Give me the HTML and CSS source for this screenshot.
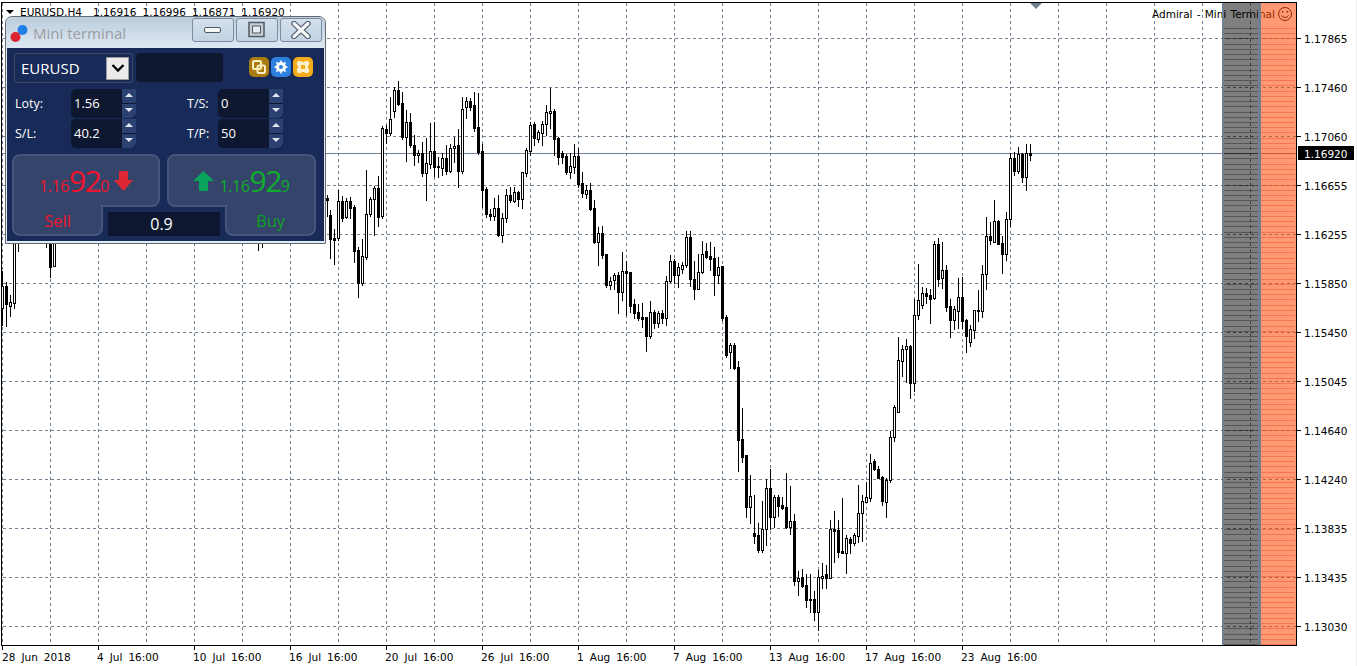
FILE: index.html
```html
<!DOCTYPE html>
<html lang="en">
<head>
<meta charset="utf-8">
<title>EURUSD,H4 Mini terminal</title>
<link rel="stylesheet" href="styles.css">
</head>
<body>
<main class="stage">
  <svg id="chart" class="chart" width="1357" height="666" viewBox="0 0 1357 666" xmlns="http://www.w3.org/2000/svg"></svg>

  <section class="panel">
    <header class="titlebar">
      <svg class="logo" width="20" height="20" viewBox="0 0 20 20"><circle cx="13.5" cy="7" r="5" fill="#1f7fe8"/><circle cx="6.5" cy="14" r="5" fill="#d9232e"/></svg>
      <span class="title">Mini terminal</span>
      <div class="winbtns">
        <button class="winbtn"><svg width="20" height="10" viewBox="0 0 20 10"><rect x="1.5" y="2.5" width="16" height="5" rx="1.5" fill="#f4f6f8" stroke="#4f5a66"/></svg></button>
        <button class="winbtn"><svg width="20" height="18" viewBox="0 0 20 18"><rect x="2" y="1.5" width="15" height="14" fill="#c9ced4" stroke="#4f5a66" stroke-width="1.5"/><rect x="5.5" y="5" width="8" height="7" fill="#e6ecf2" stroke="#4f5a66"/></svg></button>
        <button class="winbtn"><svg width="20" height="18" viewBox="0 0 20 18"><path d="M3 2.5 L17 15.5 M17 2.5 L3 15.5" stroke="#4f5a66" stroke-width="5.5" stroke-linecap="round"/><path d="M3 2.5 L17 15.5 M17 2.5 L3 15.5" stroke="#f7f8fa" stroke-width="3.2" stroke-linecap="round"/></svg></button>
      </div>
    </header>

    <div class="body">
      <div class="toprow">
        <div class="select">
          <span class="symbol">EURUSD</span>
          <span class="dropbtn"><svg width="14" height="10" viewBox="0 0 14 10"><path d="M1.5 2 L7 7.5 L12.5 2" fill="none" stroke="#000" stroke-width="2.4"/></svg></span>
        </div>
        <div class="darkfield"></div>
        <div class="tools">
          <span class="tool tool-amber"><svg width="16" height="16" viewBox="0 0 16 16"><rect x="2" y="2" width="8" height="8" rx="1.5" fill="none" stroke="#fdeec2" stroke-width="2"/><rect x="6.5" y="6.5" width="7.5" height="7.5" rx="1.5" fill="none" stroke="#fdeec2" stroke-width="2"/></svg></span>
          <span class="tool tool-blue"><svg width="16" height="16" viewBox="0 0 16 16"><circle cx="8" cy="8" r="3.6" fill="none" stroke="#fff" stroke-width="3"/><path d="M8 1.5V3.5M8 12.5V14.5M1.5 8H3.5M12.5 8H14.5M3.4 3.4L4.8 4.8M11.2 11.2L12.6 12.6M12.6 3.4L11.2 4.8M4.8 11.2L3.4 12.6" stroke="#fff" stroke-width="1.6"/></svg></span>
          <span class="tool tool-orange"><svg width="16" height="16" viewBox="0 0 16 16"><circle cx="4.5" cy="4.5" r="2.7" fill="#fdf0cc"/><circle cx="11.5" cy="4.5" r="2.7" fill="#fdf0cc"/><circle cx="4.5" cy="11.5" r="2.7" fill="#fdf0cc"/><circle cx="11.5" cy="11.5" r="2.7" fill="#fdf0cc"/><rect x="4.5" y="3" width="7" height="10" fill="#fdf0cc"/><rect x="3" y="4.5" width="10" height="7" fill="#fdf0cc"/><rect x="6" y="6" width="4" height="4" fill="#f5ac1b"/></svg></span>
        </div>
      </div>

      <div class="params">
        <label class="lbl">Loty:</label>
        <div class="field"><span class="val">1.56</span><span class="spin"><i class="up"></i><i class="down"></i></span></div>
        <label class="lbl lbl-right">T/S:</label>
        <div class="field"><span class="val">0</span><span class="spin"><i class="up"></i><i class="down"></i></span></div>
        <label class="lbl">S/L:</label>
        <div class="field"><span class="val">40.2</span><span class="spin"><i class="up"></i><i class="down"></i></span></div>
        <label class="lbl lbl-right">T/P:</label>
        <div class="field"><span class="val">50</span><span class="spin"><i class="up"></i><i class="down"></i></span></div>
      </div>

      <div class="deal">
        <div class="quotes">
          <div class="card card-sell">
            <span class="quote sell"><small>1.16</small><b>92</b><small>0</small></span>
            <svg class="arrow" width="19" height="20" viewBox="0 0 19 20"><path d="M5 0H14V9H19L9.5 20L0 9H5Z" fill="#dc2832"/></svg>
          </div>
          <div class="card card-buy">
            <svg class="arrow" width="21" height="20" viewBox="0 0 21 20"><path d="M10.5 0L21 10H15V20H6V10H0Z" fill="#0aa35c"/></svg>
            <span class="quote buy"><small>1.16</small><b>92</b><small>9</small></span>
          </div>
        </div>
        <div class="actions">
          <div class="tab tab-sell">Sell</div>
          <div class="volume">0.9</div>
          <div class="tab tab-buy">Buy</div>
        </div>
      </div>
    </div>
  </section>
</main>
<script src="chart.js"></script>
</body>
</html>
```
FILE: styles.css
```css
* { box-sizing: border-box; }
html, body { margin: 0; padding: 0; background: #fff; }
body { width: 1357px; height: 666px; overflow: hidden; font-family: "Liberation Sans", Arial, sans-serif; }
.stage { position: relative; width: 1357px; height: 666px; }
.chart { display: block; }
.chart text { font-family: "DejaVu Sans", "Liberation Sans", sans-serif; font-size: 10.5px; word-spacing: 2.7px; fill: #000; white-space: pre; }
.chart text.cur { fill: #fff; }
.chart text.note { word-spacing: 0.9px; }

.panel {
  position: absolute; left: 5px; top: 16px; width: 321px; height: 228px;
  border: 1px solid #666a70; border-radius: 7px 7px 0 0;
  padding: 0 1px 2px;
  background: #dfe9f3;
  font-family: "Open Sans", "Liberation Sans", sans-serif;
  color: #fff;
  display: flex; flex-direction: column;
}
.titlebar {
  height: 31px; flex: none; display: flex; align-items: center;
  padding-left: 2px; margin: 0 -1px;
  border-radius: 6px 6px 0 0;
  background: linear-gradient(#bccddd, #dde8f3);
}
.logo { flex: none; margin-left: 1px; }
.title { margin-left: 4px; font-size: 15px; color: #9a9da1; flex: 1; }
.winbtns { display: flex; gap: 2px; margin-right: 3px; margin-top: -5px; }
.winbtn {
  width: 42px; height: 24px; padding: 0; border: 1px solid #7b8ba0; border-radius: 3px;
  background: linear-gradient(#d3e0ec, #c3d3e3);
  display: flex; align-items: center; justify-content: center;
}
.body { flex: 1; background: #172a58; padding: 5px 0 0 7px; }

.toprow { display: flex; align-items: flex-start; height: 30px; }
.select {
  width: 119px; height: 30px; border: 1px solid #3f4a60; border-radius: 3px;
  display: flex; align-items: center; justify-content: space-between;
  padding: 0 3px 0 6px; flex: none;
}
.symbol { font-size: 15px; color: #fff; }
.dropbtn {
  width: 23px; height: 23px; background: #eceaea; border: 1px solid #9a9a9a;
  display: flex; align-items: center; justify-content: center;
}
.darkfield { width: 87px; height: 29px; margin-left: 3px; background: #0d1830; border-radius: 4px; flex: none; }
.tools { display: flex; gap: 2px; margin-left: 26px; margin-top: 4px; }
.tool { width: 20px; height: 20px; border-radius: 5px; display: flex; align-items: center; justify-content: center; }
.tool-amber { background: #a87c0e; }
.tool-blue { background: #2e80de; }
.tool-orange { background: #f5ac1b; }

.params {
  display: grid; grid-template-columns: 56px 65px 51px 31px 65px; grid-auto-rows: 29px; row-gap: 1px;
  margin: 6px 0 0 1px;
  align-items: center;
}
.lbl { font-size: 12.5px; color: #fff; }
.lbl-right { grid-column: 4; }
.field { display: flex; height: 29px; border-radius: 5px 0 5px 5px; background: #0d1730; overflow: hidden; }
.val { flex: 1; font-size: 13px; color: #fff; padding-left: 3px; line-height: 28px; }
.spin { width: 14px; display: flex; flex-direction: column; gap: 1px; background: #0d1730; }
.spin i { flex: 1; background: #2b4172; position: relative; display: block; }
.spin i::after {
  content: ""; position: absolute; left: 3px; top: 4px;
  border-left: 4px solid transparent; border-right: 4px solid transparent;
}
.spin .up::after { border-bottom: 4px solid #dfe6f2; }
.spin .down::after { border-top: 4px solid #dfe6f2; }
.spin .down { border-bottom-right-radius: 5px; }

.deal { margin: 6px 0 0 -2px; width: 304px; }
.quotes { display: grid; grid-template-columns: 148px 149px; column-gap: 7px; }
.card {
  height: 53px; background: #35446a; border: 2px solid #46557b; border-radius: 8px;
  display: flex; align-items: center; justify-content: center; gap: 5px;
}
.card-sell { border-bottom-left-radius: 0; }
.card-buy { border-bottom-right-radius: 0; }
.quote { display: flex; align-items: baseline; line-height: 1; }
.quote small { font-size: 16px; letter-spacing: -0.4px; }
.quote b { font-size: 30px; font-weight: 400; letter-spacing: -1.5px; }
.sell { color: #f3132c; }
.buy { color: #0eae2a; }
.arrow { flex: none; }
.actions { display: flex; margin-top: -2px; height: 31px; }
.tab {
  width: 91px; flex: none; background: #35446a; border: 2px solid #46557b; border-top: 0;
  font-size: 16.5px; display: flex; align-items: center; justify-content: center; padding-top: 2px;
  border-radius: 0 0 8px 8px;
}
.tab-sell { color: #f3132c; }
.tab-buy { color: #0ea124; }
.volume {
  flex: none; width: 112px; height: 24px; margin: 7px 5px 0; padding-right: 5px;
  background: #0d1830; border-radius: 3px; text-align: center; font-size: 16px; line-height: 25px; color: #fff;
}
```
FILE: chart.js
```js
(function () {
  var NS = 'http://www.w3.org/2000/svg';
  var svg = document.getElementById('chart');
  var SL = '#708090';

  function el(name, attrs, parent) {
    var n = document.createElementNS(NS, name);
    for (var k in attrs) n.setAttribute(k, attrs[k]);
    (parent || svg).appendChild(n);
    return n;
  }
  function rect(x, y, w, h, fill, parent, op) {
    var a = { x: x, y: y, width: w, height: h, fill: fill, 'shape-rendering': 'crispEdges' };
    if (op) a['fill-opacity'] = op;
    return el('rect', a, parent);
  }
  function text(x, y, s, cls) {
    var t = el('text', { x: x, y: y });
    if (cls) t.setAttribute('class', cls);
    t.textContent = s;
    return t;
  }

  var R = 1296, B = 645;
  var levels = [
    [38, '1.17865'], [87, '1.17460'], [136, '1.17060'], [185, '1.16655'], [234, '1.16255'],
    [283, '1.15850'], [332, '1.15450'], [381, '1.15045'], [430, '1.14640'], [479, '1.14240'],
    [528, '1.13835'], [577, '1.13435'], [626, '1.13030']
  ];
  var dates = [
    [2, '28 Jun 2018'], [97, '4 Jul 16:00'], [193, '10 Jul 16:00'], [289, '16 Jul 16:00'],
    [385, '20 Jul 16:00'], [481, '26 Jul 16:00'], [577, '1 Aug 16:00'], [673, '7 Aug 16:00'],
    [769, '13 Aug 16:00'], [865, '17 Aug 16:00'], [961, '23 Aug 16:00']
  ];

  /* grid */
  var x, y, i;
  for (x = 2; x < R; x += 48) {
    for (y = 3; y < B; y += 6) rect(x, y, 1, Math.min(3, B - y), SL);
  }
  levels.forEach(function (l) {
    for (var px = 3; px < R; px += 6) rect(px, l[0], Math.min(3, R - px), 1, SL);
  });

  /* price line */
  rect(2, 153, R - 2, 1, SL);

  /* labels on the canvas */
  text(20, 16, 'EURUSD,H4');
  text(93, 16, '1.16916 1.16996 1.16871 1.16920');
  el('path', { d: 'M6 10H14L10 14Z', fill: '#000' });
  text(1152, 18, 'Admiral - Mini Terminal', 'note');
  var sm = el('g', { fill: 'none', stroke: '#000', 'stroke-width': '1' });
  el('circle', { cx: 1285, cy: 14, r: 6.5 }, sm);
  el('circle', { cx: 1282.6, cy: 11.8, r: 0.9, fill: '#000', stroke: 'none' }, sm);
  el('circle', { cx: 1287.4, cy: 11.8, r: 0.9, fill: '#000', stroke: 'none' }, sm);
  el('path', { d: 'M1281.4 15.5 Q1285 19.5 1288.6 15.5' }, sm);

  /* shaded zones */
  rect(1222, 3, 36, B - 3, '#000', svg, 0.5);
  rect(1261, 3, 35, B - 3, '#ff4500', svg, 0.55);
  for (y = 28; y < B; y += 5.22) {
    var yy = Math.round(y);
    rect(1224, yy, 34, 1, '#000', svg, 0.32);
    rect(1261, yy, 34, 1, '#e0401a', svg, 0.4);
  }
  rect(1222, 3, 2, B - 3, SL);
  rect(1258, 3, 3, B - 3, SL);

  /* candles: [x, high, bodyTop, bodyBottom, low, bullish] */
  function candle(x, h, t, b, l, up) {
    rect(x, h, 1, l - h + 1, '#000');
    rect(x - 1, t, 3, b - t + 1, '#000');
    if (up && b - t > 1) rect(x, t + 1, 1, b - t - 1, '#fff');
  }
  [[2,271,286,308,325,1],[6,282,286,304,326,0],[10,295,302,306,316,1],[14,200,220,303,308,1],[18,230,234,236,251,0],
   [46,230,232,235,247,0],[50,230,235,267,277,0],[54,230,235,266,266,1],[258,230,234,236,250,0],[262,230,234,236,247,0],
   [327,195,198,200,216,0]].forEach(function (c) { candle.apply(null, c); });

  var rows = [
    [210,215,239,258,0],[229,238,240,264,0],[190,201,238,240,1],[196,201,218,221,0],[198,201,217,218,1],[197,201,208,218,0],
    [205,207,251,262,0],[247,250,283,297,0],[239,256,283,285,1],[170,214,257,259,1],[197,199,214,216,1],[186,188,199,235,1],
    [176,188,217,226,0],[126,128,216,218,1],[125,129,133,143,0],[97,119,133,135,1],[87,90,111,117,1],[81,90,104,105,0],
    [92,103,137,139,0],[110,122,137,161,1],[113,122,145,147,0],[135,145,155,165,0],[150,153,155,162,1],[142,153,173,176,0],
    [138,163,173,200,1],[123,151,164,168,1],[122,151,167,176,0],[157,166,167,177,0],[153,158,168,175,1],[145,158,171,174,0],
    [144,148,171,172,1],[137,146,148,162,1],[129,145,171,187,0],[97,109,171,173,1],[97,101,107,118,1],[98,101,107,110,0],
    [92,105,128,131,0],[93,127,152,154,0],[144,151,190,207,0],[187,189,214,217,0],[209,214,216,220,0],[198,208,216,220,1],
    [195,208,235,236,0],[213,218,235,242,1],[189,195,218,222,1],[187,195,200,202,0],[187,192,201,202,1],[191,192,199,206,0],
    [172,172,199,208,1],[148,150,173,176,1],[122,125,151,155,1],[122,124,138,145,0],[130,132,139,142,1],[121,124,133,145,1],
    [105,112,124,135,1],[88,111,113,128,1],[109,111,139,155,0],[137,138,157,164,0],[151,153,157,163,0],[154,156,172,174,0],
    [153,166,172,178,1],[144,156,167,173,1],[148,156,184,187,0],
    [172,183,193,197,0],[185,190,194,198,1],[183,190,209,210,0],[200,208,242,243,0],[227,233,242,265,1],[226,233,255,258,0],
    [254,254,285,287,0],[277,281,285,289,1],[273,275,280,289,1],[272,275,292,313,0],[252,271,292,300,1],[261,271,273,315,0],
    [272,272,306,312,0],[299,304,313,318,0],[304,312,318,320,0],[303,317,319,327,0],[317,317,336,351,0],[301,312,336,338,1],
    [310,312,323,328,0],[311,313,323,327,1],[310,313,318,323,0],[276,281,318,325,1],[255,261,281,282,1],[259,261,275,283,0],
    [263,267,275,287,1],[262,265,269,273,1],[231,237,265,267,1],[231,237,279,286,0],[261,279,289,299,0],[254,272,289,289,1],
    [241,254,272,273,1],[243,251,257,258,0],[242,256,259,270,0],[247,258,275,295,0],[257,267,275,283,1],[266,266,318,320,0],
    [315,317,355,357,0],[343,345,352,368,1],[343,345,368,369,0],[361,367,440,471,0],[408,439,457,462,0],[455,455,507,517,0],
    [475,496,507,523,1],[495,533,536,543,0],[523,535,550,552,0],[501,529,550,552,1],[479,488,529,545,1],[469,488,517,529,0],
    [495,497,517,527,1],[495,497,506,516,0],[497,505,508,509,0],[473,507,527,528,0],[486,521,527,534,1],[514,521,581,585,0],
    [571,578,581,595,1],[569,577,586,587,0],[574,585,600,607,0],[574,599,600,612,0],[591,599,612,620,0],[570,577,612,630,1],
    [563,576,578,588,1],[565,574,578,588,0],[520,529,578,578,1],[511,529,531,562,0],[520,530,552,557,0],[498,551,553,553,0],
    [535,538,553,573,1],[537,539,543,553,0],[533,535,543,545,1],[485,513,536,542,1],[495,501,513,541,1],[482,497,502,502,1],
    [454,463,498,501,1],[459,461,469,470,0],[466,469,478,478,0],[476,477,501,505,0],[478,480,502,517,1],
    [431,437,480,482,1],[405,407,437,441,1],[337,360,412,412,1],[345,349,361,376,1],[339,346,349,382,1],[345,346,383,398,0],
    [299,315,383,391,1],[264,300,315,319,1],[287,293,305,308,1],[288,293,296,303,0],[289,295,299,323,0],[241,244,298,299,1],
    [238,244,279,286,0],[242,270,278,288,1],[265,270,307,311,0],[299,306,320,337,0],[306,309,320,329,1],[278,297,311,328,1],
    [277,297,321,328,0],[319,320,336,352,0],[325,329,342,346,1],[310,310,330,338,1],[290,310,311,321,1],[265,274,311,317,1],
    [217,236,274,289,1],[222,236,240,244,0],[200,221,242,242,1],[220,221,244,244,0],[236,243,254,273,0],[212,219,254,260,1],
    [153,158,219,226,1],[152,158,171,175,0],[147,154,171,173,1],[153,154,177,182,0],[144,153,177,190,1],[144,153,155,160,0]
  ];
  for (i = 0; i < rows.length; i++) {
    candle(330 + 4 * i, rows[i][0], rows[i][1], rows[i][2], rows[i][3], rows[i][4]);
  }

  /* frame */
  rect(1, 2, R, 1, '#000');
  rect(1, 2, 1, B - 1, '#000');
  rect(R, 2, 1, B - 1, '#000');
  rect(1, B, R, 1, '#000');
  rect(1356, 0, 1, 666, '#f0f0f0');
  el('path', { d: 'M1030 3H1042L1036 9Z', fill: SL });

  /* price axis */
  levels.forEach(function (l) {
    rect(R, l[0], 5, 1, '#000');
    text(1304, l[0] + 5, l[1]);
  });
  rect(1298, 146, 56, 14, '#000');
  text(1304, 158, '1.16920', 'cur');

  /* time axis */
  for (x = 2; x < 1000; x += 96) rect(x, B, 1, 5, '#000');
  dates.forEach(function (d) { text(d[0], 661, d[1]); });
})();
```
